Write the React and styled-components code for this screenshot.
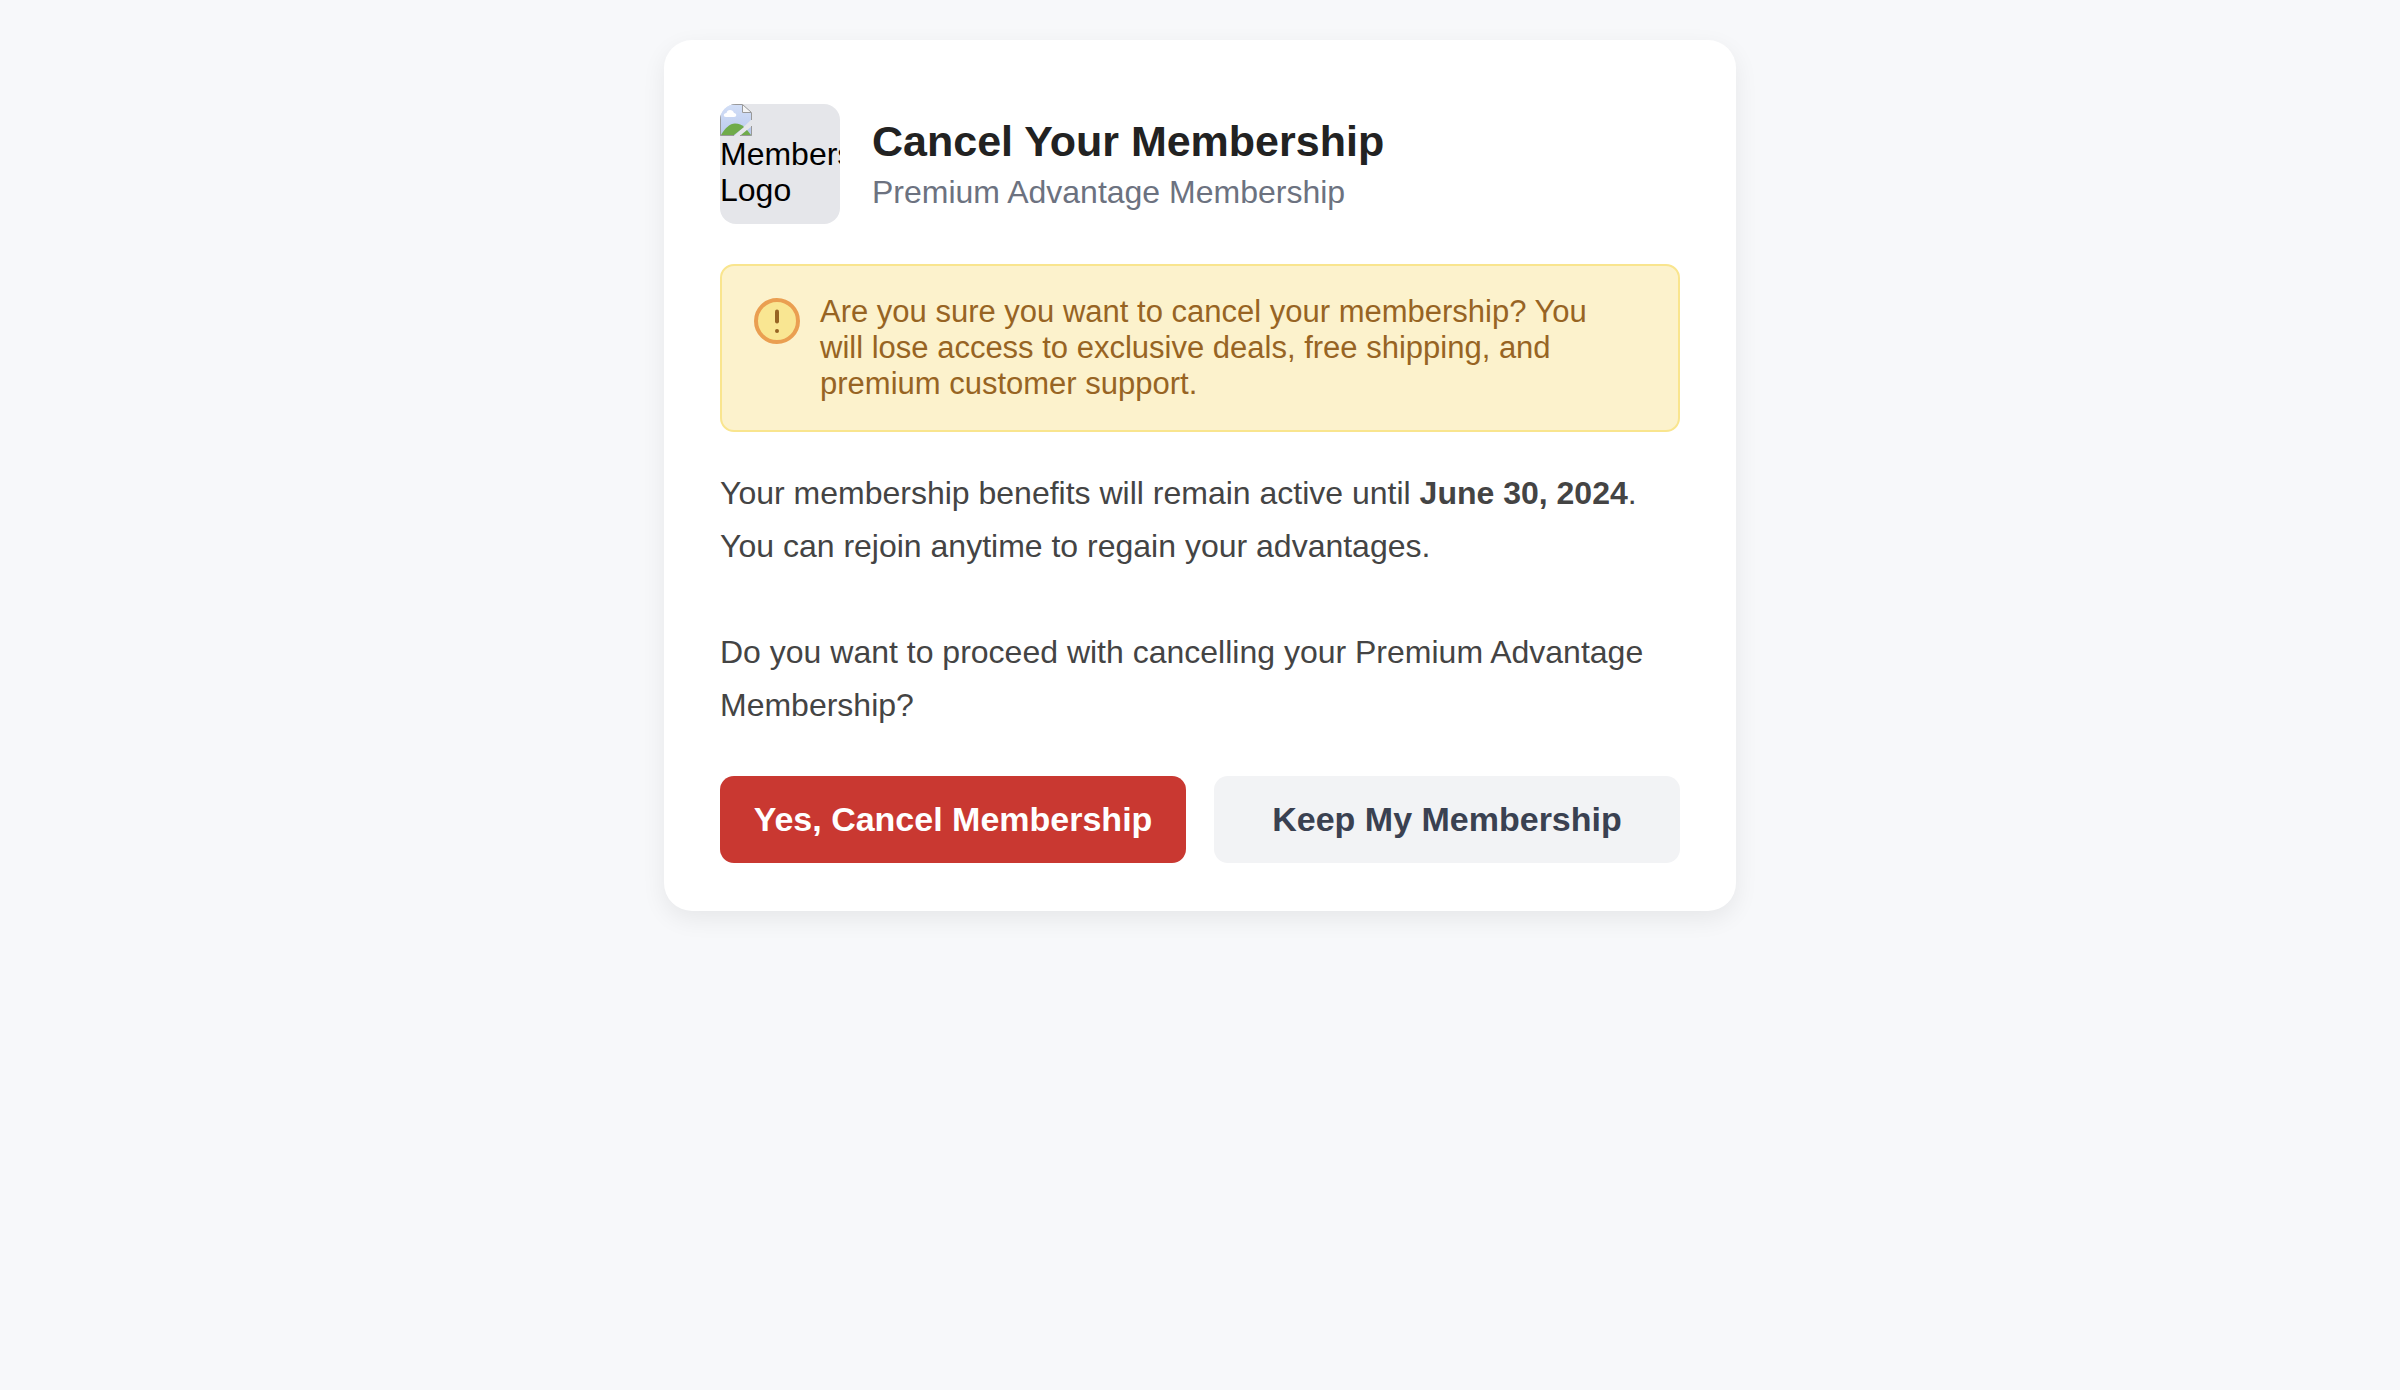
import React from "react";
import styled, { createGlobalStyle } from "styled-components";

const GlobalStyle = createGlobalStyle`
  *, *::before, *::after { box-sizing: border-box; }
  body {
    margin: 0;
    background: #f7f8fa;
    font-family: Arial, "Liberation Sans", sans-serif;
    font-size: 32px;
    line-height: 36px;
  }
`;

const Page = styled.main`
  display: flex;
  justify-content: center;
  padding: 40px;
`;

const Card = styled.section`
  width: 100%;
  max-width: 1072px;
  padding: 64px 56px 48px;
  border-radius: 28px;
  background: #fff;
  box-shadow: 0 8px 24px rgba(0, 0, 0, 0.07);
`;

const Header = styled.header`
  display: flex;
  align-items: center;
  gap: 32px;
  margin-bottom: 40px;
`;

const Logo = styled.div`
  flex: none;
  width: 120px;
  height: 120px;
  overflow: hidden;
  border-radius: 16px;
  background: #e5e6ea;
  color: #000;

  svg { display: block; }
`;

const Titles = styled.div`
  display: flex;
  flex-direction: column;
  gap: 8px;
  padding-bottom: 2px;
`;

const Title = styled.h1`
  margin: 0;
  color: #222;
  font-size: 43px;
  line-height: 50px;
  font-weight: 700;
`;

const Subtitle = styled.p`
  margin: 0;
  color: #6c7280;
`;

const Warning = styled.div`
  display: flex;
  align-items: flex-start;
  gap: 20px;
  padding: 28px 48px 28px 32px;
  border: 2px solid #f9e58e;
  border-radius: 14px;
  background: #fcf2cc;
  color: #976423;
  font-size: 31px;

  svg { flex: none; margin-top: 4px; }
  p { margin: 0; }
`;

const Details = styled.p`
  margin: 35px 0 44px;
  color: #444;
  line-height: 53px;
`;

const Actions = styled.div`
  display: flex;
  gap: 28px;
`;

const Button = styled.button`
  flex: 1;
  padding: 24px 0;
  border: 0;
  border-radius: 14px;
  background: ${(p) => (p.$danger ? "#c93831" : "#f2f3f5")};
  color: ${(p) => (p.$danger ? "#fff" : "#3a4151")};
  font: 700 34px/39px Arial, "Liberation Sans", sans-serif;
  cursor: pointer;
`;

function MissingImageIcon() {
  return (
    <svg width="32" height="32" viewBox="0 0 32 32" aria-hidden="true">
      <defs>
        <linearGradient id="sky" x1="0" y1="0" x2="0" y2="1">
          <stop offset="0" stopColor="#d3dff7" />
          <stop offset="1" stopColor="#bacaed" />
        </linearGradient>
      </defs>
      <path d="M0 0H22L32 9V15L14 32H0Z" fill="url(#sky)" />
      <path d="M32 22V32H20Z" fill="#bacaed" />
      <path d="M1 31C5 24 10 19.500 15 19.500C19 19.500 22 21 24 23L14 31Z" fill="#6fab4a" />
      <path d="M21 31L27 26L31 31Z" fill="#6fab4a" />
      <path d="M6 13C3 13 3 9 6.500 9C7 5 13 5 14 9C17 9 17 13 14 13Z" fill="#fff" />
      <path d="M22 0L32 9H22Z" fill="#f5f5f5" />
      <path d="M.5 31.500V.5H22.500L31.500 8.500V16M22.500 1V8.500H31M.5 31.500H14M20 31.500H31.500V22" fill="none" stroke="#999" />
    </svg>
  );
}

function AlertIcon() {
  return (
    <svg width="46" height="46" viewBox="0 0 46 46" aria-hidden="true">
      <circle cx="23" cy="23" r="21" fill="#f9e692" stroke="#ea9f51" strokeWidth="4" />
      <path d="M23 13.500V23.500" stroke="#976423" strokeWidth="4" strokeLinecap="round" />
      <circle cx="23" cy="33" r="2" fill="#976423" />
    </svg>
  );
}

export default function App() {
  return (
    <>
      <GlobalStyle />
      <Page>
        <Card>
          <Header>
            <Logo>
              <MissingImageIcon />
              Membership Logo
            </Logo>
            <Titles>
              <Title>Cancel Your Membership</Title>
              <Subtitle>Premium Advantage Membership</Subtitle>
            </Titles>
          </Header>
          <Warning role="alert">
            <AlertIcon />
            <p>
              Are you sure you want to cancel your membership? You will lose access to exclusive
              deals, free shipping, and premium customer support.
            </p>
          </Warning>
          <Details>
            Your membership benefits will remain active until <strong>June 30, 2024</strong>.
            <br />
            You can rejoin anytime to regain your advantages.
            <br />
            <br />
            Do you want to proceed with cancelling your Premium Advantage Membership?
          </Details>
          <Actions>
            <Button type="button" $danger>Yes, Cancel Membership</Button>
            <Button type="button">Keep My Membership</Button>
          </Actions>
        </Card>
      </Page>
    </>
  );
}
